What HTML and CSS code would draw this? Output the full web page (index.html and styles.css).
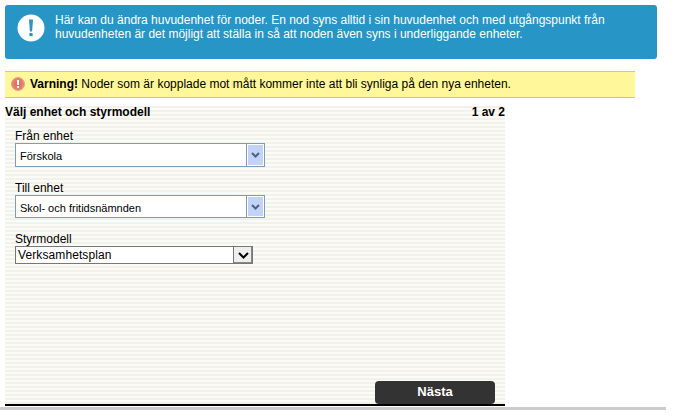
FILE: index.html
```html
<!DOCTYPE html>
<html lang="sv">
<head>
    <meta charset="UTF-8">
    <title>Ändra huvudenhet</title>
    <link rel="stylesheet" href="styles.css">
</head>
<body>
    <div class="info-box">
        <svg class="info-icon" width="28" height="28" viewBox="0 0 28 28">
            <circle cx="14" cy="14" r="13.5" fill="#fff"/>
            <path d="M12 5.5h4l-.9 12h-2.2z" fill="#2795c6"/>
            <rect x="12.4" y="19" width="3.2" height="3.2" fill="#2795c6"/>
        </svg>
        <p>Här kan du ändra huvudenhet för noder. En nod syns alltid i sin huvudenhet och med utgångspunkt från huvudenheten är det möjligt att ställa in så att noden även syns i underliggande enheter.</p>
    </div>

    <div class="warning">
        <svg class="warning-icon" width="14" height="14" viewBox="0 0 14 14">
            <defs>
                <radialGradient id="warn-fill">
                    <stop offset="0" stop-color="#e8604f"/>
                    <stop offset="1" stop-color="#e58a78"/>
                </radialGradient>
            </defs>
            <circle cx="7" cy="7" r="6.5" fill="url(#warn-fill)" stroke="#dba78f"/>
            <rect x="6" y="3" width="2" height="5" fill="#fff"/>
            <rect x="6" y="9" width="2" height="2" fill="#fff"/>
        </svg>
        <span><b>Varning!</b> Noder som är kopplade mot mått kommer inte att bli synliga på den nya enheten.</span>
    </div>

    <div class="panel">
        <div class="panel-head">
            <span>Välj enhet och styrmodell</span>
            <span>1 av 2</span>
        </div>
        <div class="field">
            <label>Från enhet</label>
            <div class="combo">
                <span class="combo-text">Förskola</span>
                <span class="combo-btn">
                    <svg width="9" height="6" viewBox="0 0 9 6"><path d="M1 1l3.5 3.5L8 1" fill="none" stroke="#4d6185" stroke-width="2"/></svg>
                </span>
            </div>
        </div>
        <div class="field">
            <label>Till enhet</label>
            <div class="combo combo-short">
                <span class="combo-text">Skol- och fritidsnämnden</span>
                <span class="combo-btn">
                    <svg width="9" height="6" viewBox="0 0 9 6"><path d="M1 1l3.5 3.5L8 1" fill="none" stroke="#4d6185" stroke-width="2"/></svg>
                </span>
            </div>
        </div>
        <div class="field">
            <label>Styrmodell</label>
            <div class="plain-select">
                <span class="plain-text">Verksamhetsplan</span>
                <span class="plain-btn">
                    <svg width="11" height="7" viewBox="0 0 11 7"><path d="M1 1l4.5 4.5L10 1" fill="none" stroke="#000" stroke-width="2"/></svg>
                </span>
            </div>
        </div>
        <div class="panel-foot">
            <button class="next-btn">Nästa</button>
        </div>
    </div>
    <div class="page-line"></div>
</body>
</html>
```

FILE: styles.css
```css
html, body {
    height: 100%;
}
body {
    font-family: "Liberation Sans", Arial, sans-serif;
    font-size: 12px;
    color: #000;
    background: #fff;
    margin: 0;
    padding: 5px 0 0;
    box-sizing: border-box;
    overflow: hidden;
}
.info-box {
    display: flex;
    align-items: flex-start;
    width: 652px;
    height: 54px;
    margin-left: 5px;
    box-sizing: border-box;
    padding: 8px 12px 0 12px;
    background: #2795c6;
    border-radius: 3px;
    color: #fff;
}
.info-icon {
    flex: none;
    margin: 1px 10px 0 0;
}
.info-box p {
    margin: 0;
    line-height: 14px;
    width: 590px;
}
.warning {
    display: flex;
    align-items: center;
    width: 630px;
    height: 27px;
    margin: 12px 0 0 5px;
    box-sizing: border-box;
    padding: 0 0 2px 6px;
    background: #fff799;
    border-top: 1px solid #d9cc66;
    border-bottom: 1px solid #d9cc66;
}
.warning-icon {
    flex: none;
    margin-right: 5px;
}
.panel {
    display: flex;
    flex-direction: column;
    width: 500px;
    height: 300px;
    margin: 8px 0 0 5px;
    box-sizing: border-box;
    background: repeating-linear-gradient(to bottom, #f3f2ea 0, #f3f2ea 2px, #fbfbf7 2px, #fbfbf7 4px);
    border-bottom: 2px solid #000;
}
.panel-head {
    display: flex;
    justify-content: space-between;
    font-weight: bold;
    line-height: 13px;
    margin-bottom: 10px;
}
.field {
    margin: 0 0 14px 10px;
}
.field label {
    display: block;
    line-height: 14px;
}
.combo {
    display: flex;
    width: 250px;
    height: 24px;
    box-sizing: border-box;
    border: 1px solid #7c9cbc;
    background: #fff;
}
.combo-short {
    height: 23px;
}
.combo-text {
    flex: 1;
    font-size: 11px;
    line-height: 24px;
    padding-left: 4px;
    border-right: 1px solid #7c9cbc;
}
.combo-btn {
    display: flex;
    align-items: center;
    justify-content: center;
    width: 15px;
    margin: 1px;
    background: #c3d3f8;
}
.plain-select {
    display: flex;
    width: 238px;
    height: 18px;
    box-sizing: border-box;
    border: 1px solid #777;
    background: #fff;
}
.plain-text {
    flex: 1;
    line-height: 17px;
    padding-left: 2px;
    letter-spacing: .1px;
}
.plain-btn {
    display: flex;
    align-items: center;
    justify-content: center;
    width: 18px;
    background: #eee;
    border-left: 1px solid #777;
    box-shadow: inset -1px -1px 0 #888;
}
.panel-foot {
    display: flex;
    justify-content: flex-end;
    margin: auto 10px 0 0;
}
.next-btn {
    width: 120px;
    height: 23px;
    font: bold 13px "Liberation Sans", Arial, sans-serif;
    color: #fff;
    background: #333;
    border: none;
    border-radius: 4px;
    padding: 0 0 2px;
}
.page-line {
    width: 666px;
    height: 3px;
    margin-top: 1px;
    background: #ccc;
}
```
